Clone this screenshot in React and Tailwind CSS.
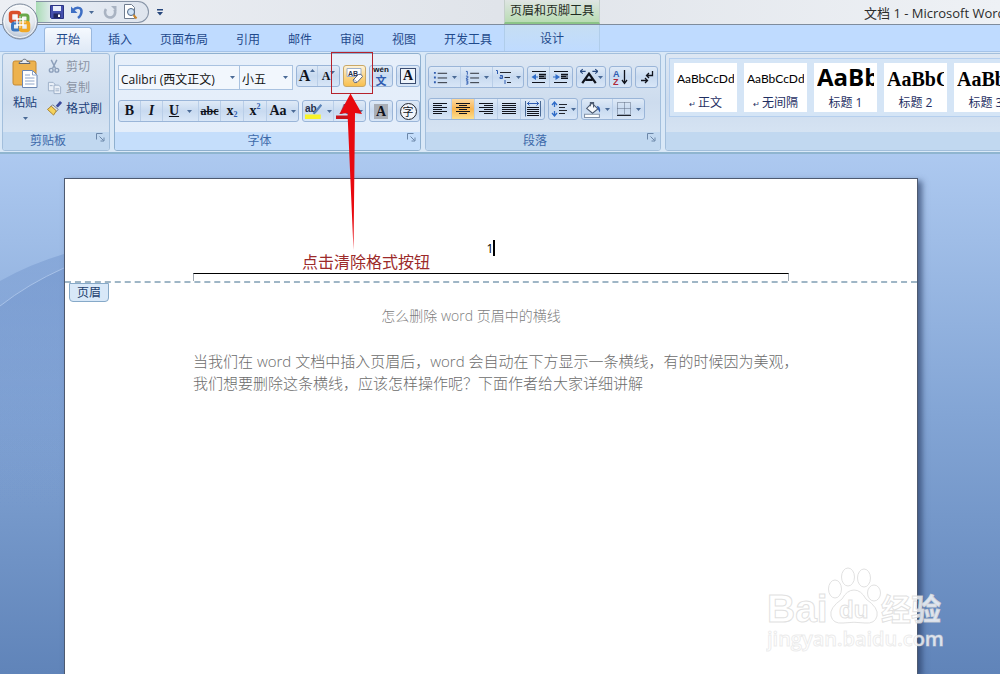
import React, { useState } from 'react';
import clsx from 'clsx';

const TABS = ['开始', '插入', '页面布局', '引用', '邮件', '审阅', '视图', '开发工具'];

const STYLES = [
    { name: '正文', sample: 'AaBbCcDd', mark: true, look: "text-xs font-['Lato',sans-serif]" },
    { name: '无间隔', sample: 'AaBbCcDd', mark: true, look: "text-xs font-['Lato',sans-serif]" },
    { name: '标题 1', sample: 'AaBb', look: 'text-2xl leading-7 font-bold' },
    { name: '标题 2', sample: 'AaBbC', look: "text-xl font-bold font-['Liberation_Serif',serif]" },
    { name: '标题 3', sample: 'AaBbC', look: "text-xl font-bold font-['Liberation_Serif',serif]" },
];

const Caret = ({ className }) => (
    <svg viewBox="0 0 5 3" className={clsx('w-[5px] h-[3px] shrink-0', className)} aria-hidden="true">
        <path d="M0 0h5L2.500 3z" fill="#4a6a96" />
    </svg>
);

const Icon = ({ children, className = 'w-4 h-4' }) => (
    <svg viewBox="0 0 16 16" className={clsx('shrink-0', className)} fill="none" aria-hidden="true">
        {children}
    </svg>
);

/* rows: [x start, x end] of every text line in an alignment icon */
const Lines = ({ rows, className }) => (
    <Icon className={className}>
        {rows.map(([a, b], i) => (
            <path key={i} d={`M${a} ${2.5 + i * 2}H${b}`} stroke="#10131c" strokeWidth="1" shapeRendering="crispEdges" />
        ))}
    </Icon>
);

const Tool = ({ label, children, className = 'w-[22px]', menu, active }) => (
    <button
        type="button"
        aria-label={label}
        className={clsx(
            'h-full flex items-center justify-center text-[#10131c] leading-none',
            menu ? 'gap-1' : '',
            active ? 'bg-linear-to-b from-[#fbd9a0] via-[#f9b650] to-[#fde08e]' : '',
            className
        )}
    >
        {children}
        {menu && <Caret />}
    </button>
);

const Cluster = ({ children }) => (
    <div className="h-[22px] flex shrink-0 rounded-[3px] border border-[#9ab5d8] bg-linear-to-b from-[#dfeaf7] via-[#c8daf0] to-[#d8e6f7] divide-x divide-[#b9cee8] overflow-hidden">
        {children}
    </div>
);

const Group = ({ title, children, className, hot }) => (
    <section
        aria-label={title || '样式'}
        className={clsx(
            'h-[98px] flex flex-col shrink-0 rounded-[3px] border overflow-hidden',
            hot ? 'border-[#8fb0cf] bg-linear-to-b from-[#e6effa] to-[#e3edfa]' : 'border-[#a3bfdc] bg-linear-to-b from-[#dde7f3] via-[#cddcee] to-[#dae7f5]',
            className
        )}
    >
        <div className="flex-1 min-h-0">{children}</div>
        <div className={clsx('h-[18px] flex items-center pr-1', hot ? 'bg-[#c5defb]' : 'bg-[#c1d8f0]')}>
            <span className="flex-1 text-center text-xs text-[#3e6aaa] leading-4">{title}</span>
            {title && (
                <button type="button" aria-label={`${title}设置`} className="w-3 h-3 -mt-1 flex justify-end">
                    <svg viewBox="0 0 9 9" className="w-[9px] h-[9px]" fill="none" stroke="#6b86a8">
                        <path d="M.5 6.500V.5h6M3.500 3.500l4 4M4.500 8H8V4.500" />
                    </svg>
                </button>
            )}
        </div>
    </section>
);

const OfficeButton = () => (
    <button type="button" aria-label="Office 按钮" className="absolute left-0 top-0 z-10 w-10 h-10">
        <svg viewBox="0 0 40 40" className="w-10 h-10" fill="none">
            <defs>
                <radialGradient id="orb" cx=".5" cy=".3" r=".75">
                    <stop offset="0" stopColor="#fff" />
                    <stop offset=".6" stopColor="#e3e8ef" />
                    <stop offset="1" stopColor="#9fb0c6" />
                </radialGradient>
            </defs>
            <circle cx="20" cy="21.500" r="17.500" fill="url(#orb)" stroke="#7a8799" />
            <circle cx="20" cy="21.500" r="16" stroke="#fff" strokeOpacity=".8" />
            <rect x="10.500" y="12.500" width="9" height="9" rx="2" stroke="#d9502a" strokeWidth="3.500" />
            <rect x="20.500" y="15" width="7.500" height="7" rx="2" stroke="#6aa84a" strokeWidth="3" />
            <rect x="12.500" y="23" width="7" height="7" rx="2" stroke="#3c78c0" strokeWidth="3" />
            <rect x="20.500" y="22.500" width="8" height="8" rx="2" stroke="#f0a825" strokeWidth="3.500" />
            <path d="M17 19h6v6h-6z" stroke="#fff" strokeWidth="1.500" />
            <path d="M20 16v12M14 22h12" stroke="#fff" strokeOpacity=".7" />
        </svg>
    </button>
);

const QuickAccess = () => (
    <div className="w-[504px] h-full flex items-center shrink-0">
        <div className="ml-9 w-[113px] h-[22px] pl-[13px] flex items-center rounded-r-full border border-l-0 border-[#8592a5] bg-linear-to-r from-[#a9dcb4] via-[#e6ecf4] via-15% to-[#dfe5ee]">
            <button type="button" aria-label="保存">
                <Icon>
                    <path d="M1.500 1.500h13v13h-12l-1-1z" fill="#4550ae" stroke="#2b3484" />
                    <path d="M4 2h8v5H4z" fill="#e9eefb" />
                    <path d="M4.500 9.500h7V14h-7z" fill="#20265c" />
                    <path d="M9 10.500h2V13H9z" fill="#fff" />
                </Icon>
            </button>
            <button type="button" aria-label="撤消" className="ml-1 flex items-center gap-1">
                <Icon>
                    <path d="M4 6.500C7 2.500 13 3 12.500 8c-.2 2.500-1.500 4.500-3.500 6" stroke="#3f6fc4" strokeWidth="2.500" />
                    <path d="M2 2.500v6.500h6.500z" fill="#3f6fc4" />
                </Icon>
                <Caret />
            </button>
            <button type="button" aria-label="恢复" className="ml-2">
                <Icon>
                    <path d="M4 5C1.500 9 4 13.500 8 13.500s6.500-4 4.500-8" stroke="#a9b3c2" strokeWidth="2.500" />
                    <path d="M9 2h5.500v5.500z" fill="#a9b3c2" />
                </Icon>
            </button>
            <button type="button" aria-label="打印预览" className="ml-1">
                <Icon>
                    <path d="M2.500.5h7l3 3v11h-10z" fill="#fff" stroke="#6f7c8e" />
                    <circle cx="9" cy="8" r="3.500" fill="#cfe3f7" stroke="#4f6684" />
                    <path d="M11.500 11l3 3.500" stroke="#c9862d" strokeWidth="2" />
                </Icon>
            </button>
        </div>
        <button type="button" aria-label="自定义快速访问工具栏" className="ml-2">
            <svg viewBox="0 0 6 7" className="w-[6px] h-[7px]" fill="#27477c">
                <path d="M0 0h6v1.500H0zM0 3h6L3 6.500z" />
            </svg>
        </button>
    </div>
);

const TitleBar = () => (
    <header className="h-[25px] flex border-b border-[#7f8c9c] bg-linear-to-r from-[#eceff4] via-[#e0e4ea] to-[#eef1f5]">
        <QuickAccess />
        <div className="w-24 shrink-0 flex items-center justify-center text-xs text-[#1f2b22] border-x border-[#c4cfca] border-b-2 border-b-[#8cc487] bg-linear-to-b from-[#dfe5e3] to-[#b9dcb3] whitespace-nowrap">
            页眉和页脚工具
        </div>
        <div className="flex-1" />
        <h1 className="w-[136px] overflow-hidden whitespace-nowrap text-[13px] leading-6 pt-px text-[#2b2b2b]">文档 1 - Microsoft Word</h1>
    </header>
);

const Clipboard = () => (
    <Group title="剪贴板" className="w-[108px]">
        <div className="flex pl-2 pt-1 text-xs gap-1">
            <button type="button" className="w-7 flex flex-col items-center text-[#1d3f7a]">
                <svg viewBox="0 0 28 31" className="w-7 h-[31px]" fill="none" aria-hidden="true">
                    <rect x="2" y="3" width="23" height="24" rx="2" fill="#edb24e" stroke="#c58a32" />
                    <path d="M8 5.500c0-2 2-2 3-2 0-3 5-3 5 0 1 0 3 0 3 2z" fill="#e7ebf0" stroke="#5f6672" />
                    <path d="M11.500 12.500h10l4.500 4.500v12.500H11.500z" fill="#fff" stroke="#6d88b4" />
                    <path d="M21.500 12.500V17H26M14 17h5M14 20h9.500M14 23h9.500M14 26h9.500" stroke="#8ea5c9" />
                </svg>
                <span className="mt-1 leading-5">粘贴</span>
                <Caret className="mt-1" />
            </button>
            <div className="flex flex-col -mt-[2px] pl-1 text-[#8a93a3] whitespace-nowrap">
                <button type="button" className="h-[21px] flex items-center gap-1">
                    <Icon className="w-[15px] h-[15px]">
                        <path d="M4.500 1l4.500 9M10.500 1L6 10" stroke="#8c9fba" strokeWidth="1.500" />
                        <circle cx="4.500" cy="12" r="2" stroke="#8c9fba" strokeWidth="1.500" />
                        <circle cx="10.500" cy="12" r="2" stroke="#8c9fba" strokeWidth="1.500" />
                    </Icon>
                    剪切
                </button>
                <button type="button" className="h-[21px] flex items-center gap-1">
                    <Icon className="w-[15px] h-[15px]">
                        <path d="M1.500 2.500h5l2 2v7h-7z" fill="#e9eff7" stroke="#9caec6" />
                        <path d="M7.500 5.500h5l2 2v7h-7z" fill="#e9eff7" stroke="#9caec6" />
                        <path d="M9 9.500h4M9 11.500h4M3 6h3" stroke="#9caec6" />
                    </Icon>
                    复制
                </button>
                <button type="button" className="h-[21px] flex items-center gap-1 text-[#1d3f7a]">
                    <Icon className="w-[15px] h-[15px]">
                        <path d="M15 1l-4.500 5" stroke="#3b4a9c" strokeWidth="3" />
                        <path d="M6 4l6 5-2 2-6-5z" fill="#dfe3ea" stroke="#707a8a" />
                        <path d="M4.500 5.500L10 10.500 7 15 .5 9z" fill="#f4d25c" stroke="#a87f2c" />
                    </Icon>
                    格式刷
                </button>
            </div>
        </div>
    </Group>
);

const Combo = ({ label, options, className }) => (
    <div className={clsx('relative h-[25px] border border-[#a9c2e0] bg-[#f2f7fd]', className)}>
        <select aria-label={label} className="w-full h-full pl-[2px] pb-1 appearance-none bg-transparent text-xs text-[#111] outline-none">
            {options.map((o) => (
                <option key={o}>{o}</option>
            ))}
        </select>
        <Caret className="absolute right-1 top-2.5 pointer-events-none" />
    </div>
);

const FontGroup = () => (
    <Group title="字体" hot className="w-[307px]">
        <div className="pl-[3px] pt-[11px] flex flex-col gap-[10px] font-['Liberation_Serif','Noto_Sans_CJK_SC',serif]">
            <div className="h-[25px] flex items-start gap-[3px]">
                <div className="flex font-['Open_Sans','Noto_Sans_CJK_SC',sans-serif]">
                    <Combo label="字体" options={['Calibri (西文正文)', '宋体', 'Cambria']} className="w-[122px]" />
                    <Combo label="字号" options={['小五', '五号', '小四']} className="w-[53px] border-l-0" />
                </div>
                <Cluster>
                    <Tool label="增大字体" className="w-[21px] text-base font-bold">
                        A<Caret className="rotate-180 mb-3" />
                    </Tool>
                    <Tool label="缩小字体" className="w-[21px] text-xs font-bold">
                        A<Caret className="mb-2" />
                    </Tool>
                </Cluster>
                <button type="button" aria-label="清除格式" className="w-[23px] h-[22px] flex items-center justify-center rounded-[3px] border border-[#c9a868] bg-linear-to-b from-[#fdf3da] via-[#fbd78a] to-[#f8c04e]">
                    <svg viewBox="0 0 18 18" className="w-[18px] h-[18px]" fill="none" aria-hidden="true">
                        <path d="M1 1.500h14v8H1z" fill="#fff" stroke="#9db0cc" />
                        <text x="2" y="8.500" fontSize="7" fontWeight="700" fill="#27304a" fontFamily="Liberation Sans">AB</text>
                        <path d="M7 13l5.500-5.500q3-1.500 4 2L11 15.500q-3 1.500-4-2.500z" fill="#fff" stroke="#5d6880" />
                        <path d="M8 12.500l3 2.500" stroke="#9aa5bb" />
                    </svg>
                </button>
                <Cluster>
                    <Tool label="拼音指南" className="w-[22px] flex-col">
                        <span className="text-[8px] leading-[8px] font-bold font-['Liberation_Sans',sans-serif]">wén</span>
                        <span className="text-[11px] leading-3 font-bold text-[#2f5cb0] font-['Noto_Sans_CJK_SC',sans-serif]">文</span>
                    </Tool>
                </Cluster>
                <Cluster>
                    <Tool label="字符边框">
                        <span className="w-4 h-4 border border-[#3a4c70] bg-[#eef4fb] text-sm leading-[14px] font-bold">A</span>
                    </Tool>
                </Cluster>
            </div>
            <div className="flex gap-[3px]">
                <Cluster>
                    <Tool label="加粗" className="w-[22px] text-sm font-bold">B</Tool>
                    <Tool label="倾斜" className="w-[22px] text-sm font-bold italic">I</Tool>
                    <Tool label="下划线" className="w-9 text-sm font-bold" menu><span className="underline pr-1">U</span></Tool>
                    <Tool label="删除线" className="w-[22px] text-xs font-bold"><span className="line-through">abc</span></Tool>
                    <Tool label="下标" className="w-[23px] text-sm font-bold">x<span className="text-[8px] mt-2 text-[#2f5cb0]">2</span></Tool>
                    <Tool label="上标" className="w-[23px] text-sm font-bold">x<span className="text-[8px] mb-2 text-[#2f5cb0]">2</span></Tool>
                    <Tool label="更改大小写" className="w-[31px] text-sm font-bold" menu>Aa</Tool>
                </Cluster>
                <Cluster>
                    <Tool label="以不同颜色突出显示文本" className="w-[31px]" menu>
                        <Icon className="w-[18px] h-[18px]">
                            <text x="0" y="8.500" fontSize="9" fontWeight="700" fill="#27304a" fontFamily="Liberation Sans">ab</text>
                            <path d="M14.500 2.500L10 8l-2.500 2.500" stroke="#5a83b8" strokeWidth="2" />
                            <path d="M0 11h14v4H0z" fill="#f8f32b" />
                        </Icon>
                    </Tool>
                    <Tool label="字体颜色" className="w-[31px]" menu>
                        <Icon className="w-[18px] h-[18px]">
                            <text x="3" y="11" fontSize="13" fontWeight="700" fill="#3b5a9a" fontFamily="Liberation Serif">A</text>
                            <path d="M0 12h15v3H0z" fill="#c8141c" />
                        </Icon>
                    </Tool>
                </Cluster>
                <Cluster>
                    <Tool label="字符底纹">
                        <span className="w-[14px] h-[15px] bg-[#a9aeb6] text-sm leading-[15px] font-bold">A</span>
                    </Tool>
                </Cluster>
                <Cluster>
                    <Tool label="带圈字符">
                        <span className="w-[17px] h-[17px] rounded-full border border-[#22262f] bg-[#f1f5fb] text-[11px] leading-[15px] font-['Noto_Sans_CJK_SC',sans-serif]">字</span>
                    </Tool>
                </Cluster>
            </div>
        </div>
    </Group>
);

const ParagraphGroup = () => (
    <Group title="段落" className="w-[236px]">
        <div className="pl-[2px] pt-[12px] flex flex-col gap-[10px]">
            <div className="flex gap-[3px]">
                <Cluster>
                    <Tool label="项目符号" className="w-8" menu>
                        <Icon className="w-[15px] h-[15px]">
                            <path d="M1 2h2v2H1zM1 7h2v2H1zM1 12h2v2H1z" fill="#2f5cb0" />
                            <path d="M5 3.500h10M5 8.500h10M5 13.500h10" stroke="#22262f" />
                        </Icon>
                    </Tool>
                    <Tool label="编号" className="w-8" menu>
                        <Icon className="w-[15px] h-[15px]">
                            <path d="M1 1.500h1.500V5M1 6.500h2v2H1.500V10H3.500M1 11.500h2V15H1M1.500 13H3" stroke="#2f5cb0" />
                            <path d="M5.500 3.500H15M5.500 8.500H15M5.500 13.500H15" stroke="#22262f" />
                        </Icon>
                    </Tool>
                    <Tool label="多级列表" className="w-[30px]" menu>
                        <Icon>
                            <path d="M0 1.500h1.500V5M4 6.500h2.500V9.500H4V8h2M9 11v4" stroke="#2f5cb0" />
                            <path d="M4 3.500h11M8.500 8.500H14M11 13.500h4" stroke="#22262f" />
                        </Icon>
                    </Tool>
                </Cluster>
                <Cluster>
                    <Tool label="减少缩进量">
                        <Icon>
                            <path d="M1 2.500h14M8 5.500h7M8 7.500h5M8 9.500h7M1 13.500h13" stroke="#10131c" />
                            <path d="M8 4.500h7v5H8z" fill="#10131c" opacity=".5" />
                            <path d="M5 5v6L.5 8zM5 7.500h2v1H5z" fill="#2f6cc8" />
                        </Icon>
                    </Tool>
                    <Tool label="增加缩进量">
                        <Icon>
                            <path d="M1 2.500h14M8 5.500h7M8 7.500h5M8 9.500h7M1 13.500h13" stroke="#10131c" />
                            <path d="M8 4.500h7v5H8z" fill="#10131c" opacity=".5" />
                            <path d="M2.500 5v6L7 8zM0 7.500h2.500v1H0z" fill="#2f6cc8" />
                        </Icon>
                    </Tool>
                </Cluster>
                <Cluster>
                    <Tool label="中文版式" className="w-[28px]">
                        <Icon className="w-[18px] h-[18px]">
                            <path d="M2 13.500L8 5l6 8.500M5 10.500h6" stroke="#10131c" strokeWidth="2" />
                            <path d="M0 3h5M2.500 1L0 3l2.500 2M11 3h5M13.500 1L16 3l-2.500 2" stroke="#27477c" strokeWidth="1" />
                        </Icon>
                        <Caret />
                    </Tool>
                </Cluster>
                <Cluster>
                    <Tool label="排序" className="w-[21px]">
                        <Icon>
                            <text x="0" y="7.500" fontSize="9" fontWeight="700" fill="#2f5cb0" fontFamily="Liberation Sans">A</text>
                            <text x="0" y="15.500" fontSize="9" fontWeight="700" fill="#b02a3c" fontFamily="Liberation Sans">Z</text>
                            <path d="M11.500 1v13M9 11l2.500 3.500L14 11" stroke="#10131c" strokeWidth="1.300" />
                        </Icon>
                    </Tool>
                </Cluster>
                <Cluster>
                    <Tool label="显示编辑标记" className="w-[21px]">
                        <Icon>
                            <path d="M13.500 2v4.500H8M10 4L7.500 6.500 10 9M2 11.500h6M6 9l2.500 2.500L6 14" stroke="#10131c" strokeWidth="1.300" />
                        </Icon>
                    </Tool>
                </Cluster>
            </div>
            <div className="flex gap-[3px]">
                <Cluster>
                    <Tool label="左对齐" className="w-[23px]"><Lines rows={[[1, 15], [1, 10], [1, 15], [1, 10], [1, 15], [1, 10]]} /></Tool>
                    <Tool label="居中" className="w-[23px]" active><Lines rows={[[1, 15], [4, 12], [1, 15], [4, 12], [1, 15], [4, 12]]} /></Tool>
                    <Tool label="右对齐" className="w-[23px]"><Lines rows={[[1, 15], [6, 15], [1, 15], [6, 15], [1, 15], [6, 15]]} /></Tool>
                    <Tool label="两端对齐" className="w-[23px]"><Lines rows={[[1, 15], [1, 15], [1, 15], [1, 15], [1, 15], [1, 15]]} /></Tool>
                    <Tool label="分散对齐" className="w-[23px]">
                        <Icon>
                            <path d="M.5 0v15.500M15.500 0v15.500" stroke="#4a6a96" />
                            <path d="M2 2.500h12M4.500.5l-2 2 2 2M11.500.5l2 2-2 2" stroke="#2f5cb0" />
                            <path d="M2 6.500h12M2 8.500h12M2 10.500h12M2 12.500h12M2 14.500h12" stroke="#10131c" />
                        </Icon>
                    </Tool>
                </Cluster>
                <Cluster>
                    <Tool label="行距" className="w-7" menu>
                        <Icon>
                            <path d="M3.500 1v5M1 4l2.500-3L6 4M3.500 10v5M1 12l2.500 3L6 12" stroke="#2f6cc8" strokeWidth="1.300" />
                            <path d="M8 3.500h8M8 6.500h6M8 9.500h8M8 12.500h6" stroke="#22262f" />
                        </Icon>
                    </Tool>
                </Cluster>
                <Cluster>
                    <Tool label="底纹" className="w-[31px]" menu>
                        <Icon className="w-[17px] h-[17px]">
                            <path d="M7.500 2L13 7.500 8 11.500 2.500 7z" fill="#f5f8fc" stroke="#4c5a70" />
                            <path d="M6 5V1.500h3V6" stroke="#4c5a70" />
                            <path d="M12 4.500q4 .5 3 6.500l-2-3.500z" fill="#2f5cb0" />
                            <path d="M.5 12.500h14v3H.5z" fill="#fff" stroke="#8392a8" />
                        </Icon>
                    </Tool>
                    <Tool label="边框" className="w-[31px]" menu>
                        <Icon>
                            <path d="M1.500 1.500h13v12h-13zM8.500 1.500v12M1.500 7.500h13" stroke="#5f6d83" strokeDasharray="1 1" />
                            <path d="M1 14.500h14" stroke="#22262f" />
                        </Icon>
                    </Tool>
                </Cluster>
            </div>
        </div>
    </Group>
);

const StylesGroup = () => (
    <Group className="w-[420px]">
        <div className="ml-[3px] mt-1 h-[59px] p-1 flex gap-[7px] border border-[#b5cfee] bg-[#d5e5f6]">
            {STYLES.map((s) => (
                <button key={s.name} type="button" className="w-[63px] h-[49px] shrink-0 px-[3px] flex flex-col bg-white overflow-hidden">
                    <span className={clsx('w-full h-8 overflow-hidden whitespace-nowrap text-left text-black', s.look, s.name !== '标题 1' && 'leading-8')}>{s.sample}</span>
                    <span className="w-full text-center text-xs leading-4 text-[#1f2f63] whitespace-nowrap">
                        {s.mark && <span className="text-[8px]">↵ </span>}
                        {s.name}
                    </span>
                </button>
            ))}
        </div>
    </Group>
);

const Swoosh = () => (
    <svg viewBox="0 0 64 520" preserveAspectRatio="none" className="absolute left-0 top-0 w-16 h-full" aria-hidden="true">
        <defs>
            <linearGradient id="wave" x1="0" y1="0" x2="0" y2="1">
                <stop offset="0" stopColor="#7396cd" stopOpacity=".5" />
                <stop offset="1" stopColor="#7396cd" stopOpacity="0" />
            </linearGradient>
        </defs>
        <path d="M0 127Q30 110 64 100v260H0z" fill="url(#wave)" />
        <path d="M0 152Q28 130 64 114v246H0z" fill="url(#wave)" />
        <path d="M0 152Q28 130 64 114" fill="none" stroke="#b7cdee" strokeOpacity=".7" />
    </svg>
);

/* red frame round the clear-format button, with its pointer */
const Callout = () => (
    <svg viewBox="0 0 42 200" className="absolute left-[331px] top-[52px] z-20 w-[42px] h-[200px] pointer-events-none" aria-hidden="true">
        <rect x=".5" y=".5" width="41" height="41" fill="none" stroke="#b5222c" />
        <path d="M19.500 41.500L31 62l-7-1-1.500 137L16.500 61l-8 1z" fill="#e8090f" />
    </svg>
);

const Watermark = () => (
    <div className="absolute right-[50px] bottom-4 pointer-events-none">
        <svg viewBox="0 0 184 92" className="w-[184px] h-[92px]" fill="#fff" fillOpacity=".8" stroke="#d9d9d9" strokeOpacity=".8">
            <text x="1" y="56" fontSize="39" fontWeight="700" fontFamily="Liberation Sans">Bai</text>
            <ellipse cx="69" cy="23" rx="6.500" ry="9" />
            <ellipse cx="82" cy="11" rx="6.500" ry="9" />
            <ellipse cx="98" cy="12" rx="6.500" ry="9" />
            <ellipse cx="108" cy="27" rx="6.500" ry="8" />
            <path d="M88 24q-7 0-12 9-13 9-11 17 2 8 12 7 11-1.500 22 0 10 1 12-7 2-8-11-17-5-9-12-9z" />
            <text x="73" y="52" fontSize="24" fontWeight="700" fontFamily="Liberation Sans">du</text>
            <text x="115" y="54" fontSize="30" fontWeight="700" fontFamily="Noto Sans CJK SC">经验</text>
            <text x="1" y="80" fontSize="20" fontWeight="600" fontFamily="Open Sans" strokeOpacity=".5">jingyan.baidu.com</text>
        </svg>
    </div>
);

const DocumentPage = () => (
    <main className="relative flex-1 flex flex-col pt-6 pl-16 pr-[82px] overflow-hidden bg-linear-to-b from-[#adc9f0] via-[#83a5d5] to-[#6084b9]">
        <Swoosh />
        <article className="relative flex-1 bg-white border border-b-0 border-[#4e5a70] shadow-[4px_3px_6px_rgba(40,60,100,0.7)]">
            <div className="h-[104px] px-32 flex flex-col border-b-2 border-dashed border-[#9fb6c6]">
                <div className="flex-1 pt-[61px] flex justify-center text-xs leading-[18px] text-black">
                    <span className="h-4 border-r-2 border-black">1</span>
                </div>
                <div className="h-2 border-t border-x border-x-[#a0a8b0] border-t-black" />
            </div>
            <div className="h-[19px] ml-1 w-10 rounded-b-[4px] border border-[#86a9c8] bg-[#d8e8f8] text-center text-xs leading-[18px] text-[#1d3f6e]">
                页眉
            </div>
            <h2 className="pr-10 mt-1 text-center text-sm leading-[20px] font-light text-[#808080]">怎么删除 word 页眉中的横线</h2>
            <p className="pl-32 mt-6 text-[15px] leading-[22px] font-light text-[#6c6c6c] whitespace-nowrap">
                当我们在 word 文档中插入页眉后，word 会自动在下方显示一条横线，有的时候因为美观，
                <br />
                我们想要删除这条横线，应该怎样操作呢？下面作者给大家详细讲解
            </p>
        </article>
        <Watermark />
    </main>
);

export default function App() {
    const [tab, setTab] = useState('开始');

    return (
        <div className="relative min-h-screen flex flex-col overflow-hidden font-['Open_Sans','Noto_Sans_CJK_SC',sans-serif]">
            <OfficeButton />
            <TitleBar />
            <nav className="h-[27px] pl-11 flex bg-[#bfdbff] border-b border-[#a5c3e8] text-xs">
                {TABS.map((name) => (
                    <button
                        key={name}
                        type="button"
                        onClick={() => setTab(name)}
                        className={clsx(
                            'px-3 mr-1 mt-[2px] -mb-px text-[#1f4a8c] whitespace-nowrap',
                            tab === name && 'rounded-t-[3px] border border-b-0 border-[#9ab8de] bg-linear-to-b from-[#f5f9fe] to-[#dfe9f6] px-[11px]'
                        )}
                    >
                        {name}
                    </button>
                ))}
                <button type="button" className="-ml-1 w-24 pt-px border-x border-[#b0cdea] bg-linear-to-b from-[#c6def3] to-[#bfdbff] text-[#1f4a8c]">设计</button>
            </nav>
            <div className="h-[102px] pt-px pl-[2px] flex gap-1 overflow-hidden bg-[#d9e8f7] border-b-2 border-[#8fb5cf]">
                <Clipboard />
                <FontGroup />
                <ParagraphGroup />
                <StylesGroup />
            </div>
            <DocumentPage />
            <Callout />
            <p className="absolute left-[302px] top-[251px] z-20 text-base leading-[22px] text-[#9c2a2a] whitespace-nowrap">点击清除格式按钮</p>
        </div>
    );
}
